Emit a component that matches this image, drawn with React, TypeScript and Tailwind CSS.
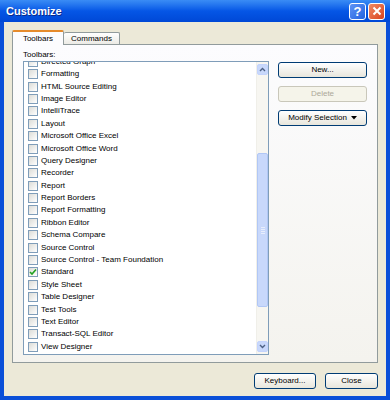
import React from "react";

const items: { label: string; checked?: boolean }[] = [
  { label: "Directed Graph" },
  { label: "Formatting" },
  { label: "HTML Source Editing" },
  { label: "Image Editor" },
  { label: "IntelliTrace" },
  { label: "Layout" },
  { label: "Microsoft Office Excel" },
  { label: "Microsoft Office Word" },
  { label: "Query Designer" },
  { label: "Recorder" },
  { label: "Report" },
  { label: "Report Borders" },
  { label: "Report Formatting" },
  { label: "Ribbon Editor" },
  { label: "Schema Compare" },
  { label: "Source Control" },
  { label: "Source Control - Team Foundation" },
  { label: "Standard", checked: true },
  { label: "Style Sheet" },
  { label: "Table Designer" },
  { label: "Test Tools" },
  { label: "Text Editor" },
  { label: "Transact-SQL Editor" },
  { label: "View Designer" },
];

function CheckBox({ checked }: { checked?: boolean }) {
  return (
    <div className="w-[10px] h-[10px] border border-[#7f9db9] bg-gradient-to-br from-[#dcdcd7] to-[#ffffff] flex items-center justify-center shrink-0">
      {checked && (
        <svg width="8" height="8" viewBox="0 0 8 8">
          <path d="M1 4 L3 6 L7 1.5" stroke="#21a121" strokeWidth="1.6" fill="none" />
        </svg>
      )}
    </div>
  );
}

function Button({ children, disabled, w }: { children: React.ReactNode; disabled?: boolean; w: string }) {
  return (
    <div
      className={
        "h-[16px] rounded-[3px] border flex items-center justify-center text-[8px] " +
        w +
        (disabled
          ? " border-[#c9c7ba] bg-[#f5f4ea] text-[#aca899]"
          : " border-[#003c74] bg-gradient-to-b from-[#ffffff] to-[#e8e6dc] text-black")
      }
    >
      {children}
    </div>
  );
}

function ScrollArrow({ up }: { up?: boolean }) {
  return (
    <div className="w-[11px] h-[11px] rounded-[2px] border border-[#c3d3fd] bg-[#c8d8fb] flex items-center justify-center">
      <svg width="7" height="5" viewBox="0 0 7 5">
        <path d={up ? "M1 4 L3.5 1.5 L6 4" : "M1 1 L3.5 3.5 L6 1"} stroke="#4d6185" strokeWidth="1.4" fill="none" />
      </svg>
    </div>
  );
}

export default function App() {
  return (
    <div
      className="w-[390px] h-[400px] flex flex-col bg-[#0a4fd8]"
      style={{ fontFamily: '"Liberation Sans", Arial, sans-serif' }}
    >
      {/* title bar */}
      <div className="h-[22px] flex items-center justify-between px-[5px] bg-gradient-to-b from-[#3a8cf5] via-[#0556e6] to-[#0048d6]">
        <span className="text-white font-bold text-[11px] pl-[1px]" style={{ textShadow: "1px 1px 0 #0a2a8a" }}>
          Customize
        </span>
        <div className="flex gap-[2px] items-center">
          <div className="w-[17px] h-[17px] rounded-[3px] border border-white bg-gradient-to-br from-[#5e93f5] to-[#2262e0] flex items-center justify-center text-white font-bold text-[13px] leading-none">
            ?
          </div>
          <div className="w-[17px] h-[17px] rounded-[3px] border border-white bg-gradient-to-br from-[#f08a64] to-[#d8401a] flex items-center justify-center">
            <svg width="10" height="10" viewBox="0 0 10 10">
              <path d="M1.5 1.5 L8.5 8.5 M8.5 1.5 L1.5 8.5" stroke="white" strokeWidth="2" />
            </svg>
          </div>
        </div>
      </div>

      {/* body */}
      <div className="flex-1 mx-[4px] mb-[4px] bg-[#ece9d8] flex flex-col px-[8px] pt-[8px]">
        {/* tabs */}
        <div className="flex items-end h-[14px] relative z-10">
          <div className="w-[52px] h-[15px] bg-[#fcfcfe] border-x border-[#919b9c] border-t-2 border-t-[#e68b2c] text-[8px] flex items-center justify-center rounded-t-[2px] mb-[-1px]">
            Toolbars
          </div>
          <div className="w-[56px] h-[12px] bg-gradient-to-b from-[#ffffff] to-[#ecebe5] border-t border-r border-[#919b9c] text-[8px] flex items-center justify-center rounded-t-[2px]">
            Commands
          </div>
        </div>
        {/* panel */}
        <div className="h-[319px] border border-[#919b9c] bg-gradient-to-b from-[#fcfcfe] to-[#f4f3ee] flex flex-col px-[10px] pt-[4px]">
          <div className="text-[8px] h-[11px] leading-[11px]">Toolbars:</div>
          <div className="flex gap-[9px] mt-[1px]">
            {/* list */}
            <div className="w-[246px] h-[294px] border border-[#7f9db9] bg-white flex overflow-hidden">
              <div className="flex-1 overflow-hidden">
                <div className="flex flex-col mt-[-6.4px] pl-[4px]">
                  {items.map((it) => (
                    <div key={it.label} className="h-[12.4px] flex items-center gap-[3px] text-[8px] text-black">
                      <CheckBox checked={it.checked} />
                      <span className="whitespace-nowrap">{it.label}</span>
                    </div>
                  ))}
                </div>
              </div>
              {/* scrollbar */}
              <div className="w-[12px] bg-[#f7f6f1] flex flex-col items-center py-[2px] border-l border-[#f0efe9]">
                <ScrollArrow up />
                <div className="flex-1 w-full flex flex-col items-center">
                  <div className="h-[78px]" />
                  <div className="w-[11px] h-[154px] rounded-[2px] border border-[#b1c7f5] bg-[#c8d8fb] flex items-center justify-center">
                    <div className="w-[4px] flex flex-col gap-[1px]">
                      <div className="h-[1px] bg-[#e8eefc]" />
                      <div className="h-[1px] bg-[#e8eefc]" />
                      <div className="h-[1px] bg-[#e8eefc]" />
                      <div className="h-[1px] bg-[#e8eefc]" />
                    </div>
                  </div>
                </div>
                <ScrollArrow />
              </div>
            </div>
            {/* right buttons */}
            <div className="flex flex-col gap-[8px] pt-[1px]">
              <Button w="w-[89px]">New...</Button>
              <Button w="w-[89px]" disabled>
                Delete
              </Button>
              <Button w="w-[89px]">
                <span className="flex items-center gap-[4px]">
                  Modify Selection
                  <svg width="6" height="4" viewBox="0 0 6 4">
                    <path d="M0 0 L6 0 L3 3.5 Z" fill="black" />
                  </svg>
                </span>
              </Button>
            </div>
          </div>
        </div>
        {/* bottom buttons */}
        <div className="flex justify-end gap-[9px] mt-[10px]">
          <Button w="w-[62px]">Keyboard...</Button>
          <Button w="w-[53px]">Close</Button>
        </div>
      </div>
    </div>
  );
}
